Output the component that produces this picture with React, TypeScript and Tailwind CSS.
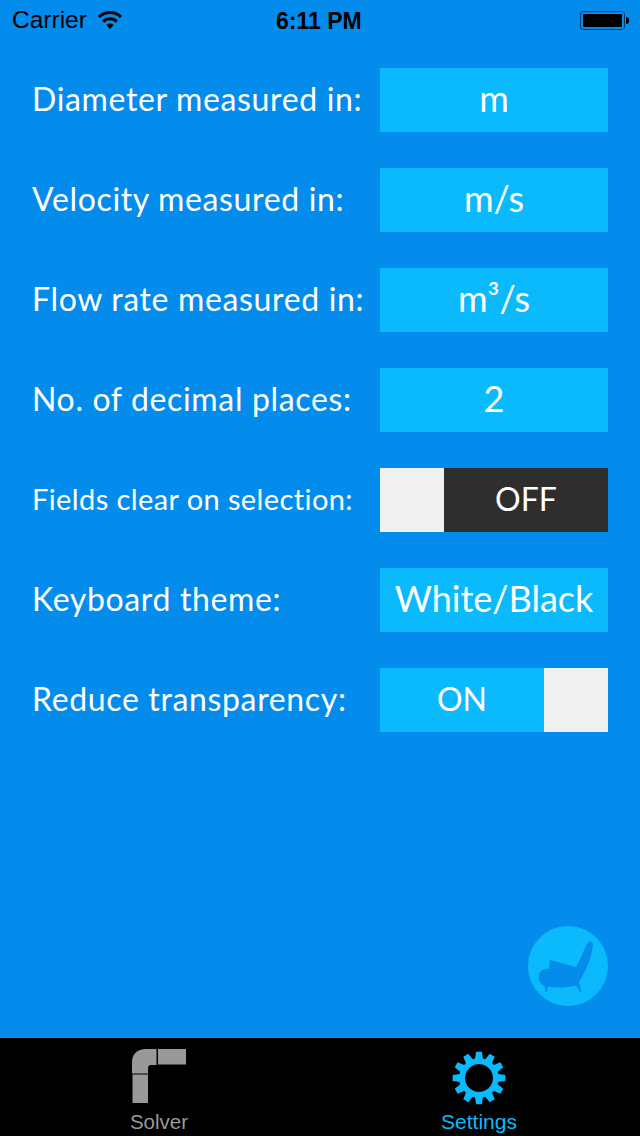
import React from "react";

const gearPath = (() => {
  const cx = 30, cy = 30, n = 12, ro = 26.5, ri = 19.8;
  let d = "";
  for (let i = 0; i < n; i++) {
    const a = (i * 2 * Math.PI) / n - Math.PI / 2;
    const pts: [number, number][] = [
      [ri, a - 0.2],
      [ro, a - 0.11],
      [ro, a + 0.11],
      [ri, a + 0.2],
    ];
    pts.forEach(([r, t], j) => {
      d += `${i === 0 && j === 0 ? "M" : "L"}${(cx + r * Math.cos(t)).toFixed(2)} ${(cy + r * Math.sin(t)).toFixed(2)}`;
    });
  }
  d += "Z M30 16 a14 14 0 1 0 0.01 0 Z";
  return d;
})();

function Row({ label, small, children }: { label: string; small?: boolean; children: React.ReactNode }) {
  return (
    <div className="flex h-16 items-center justify-between">
      <span className={`pb-[2px] pl-8 text-white ${small ? "text-[29px] tracking-[0.4px]" : "text-[32px] tracking-[0.65px]"}`}>{label}</span>
      {children}
    </div>
  );
}

function Box({ value }: { value: string }) {
  return (
    <div className="flex h-16 w-[228px] items-center justify-center bg-[#0bbafd] pb-1 text-[36px] text-white">{value}</div>
  );
}

export default function App() {
  return (
    <div className="flex h-[1136px] w-[640px] flex-col overflow-hidden bg-[#038cec] font-['Lato','Open_Sans',sans-serif]">
      {/* Status bar */}
      <div className="relative flex h-10 shrink-0 items-center pl-3 pr-[11px] font-['Liberation_Sans',sans-serif] text-black">
        <span className="text-[24.5px] leading-none">Carrier</span>
        <svg className="ml-[10px]" width="26" height="20" viewBox="0 0 26 20">
          <path d="M13 19 L9.4 15 A5.2 5.2 0 0 1 16.6 15 Z" fill="#000" />
          <path d="M6.2 11.6 A9.8 9.8 0 0 1 19.8 11.6" fill="none" stroke="#000" strokeWidth="3" />
          <path d="M2 7 A15.5 15.5 0 0 1 24 7" fill="none" stroke="#000" strokeWidth="3" />
        </svg>
        <span className="absolute left-[276px] top-[7px] text-[23px] font-bold leading-[28px]">6:11 PM</span>
        <div className="ml-auto flex items-center">
          <div className="h-[19px] w-[45px] rounded-[3px] border border-[#02396b] p-[2px]">
            <div className="h-full w-full rounded-[1px] bg-black" />
          </div>
          <div className="ml-px h-[7px] w-[3px] rounded-r-sm bg-black" />
        </div>
      </div>

      {/* Settings */}
      <div className="mt-7 flex w-[608px] flex-col gap-9">
        <Row label="Diameter measured in:"><Box value="m" /></Row>
        <Row label="Velocity measured in:"><Box value="m/s" /></Row>
        <Row label="Flow rate measured in:"><Box value="m³/s" /></Row>
        <Row label="No. of decimal places:"><Box value="2" /></Row>
        <Row label="Fields clear on selection:" small>
          <div className="flex h-16 w-[228px]">
            <div className="w-16 bg-[#f0f0f0]" />
            <div className="flex flex-1 items-center justify-center bg-[#2e2e2e] pb-[2px] text-[32px] text-white">OFF</div>
          </div>
        </Row>
        <Row label="Keyboard theme:"><Box value="White/Black" /></Row>
        <Row label="Reduce transparency:">
          <div className="flex h-16 w-[228px]">
            <div className="flex flex-1 items-center justify-center bg-[#0bbafd] pb-[2px] text-[32px] text-white">ON</div>
            <div className="w-16 bg-[#f0f0f0]" />
          </div>
        </Row>
      </div>

      {/* Floating button */}
      <div className="mt-auto mb-8 mr-8 flex h-20 w-20 items-center justify-center self-end rounded-full bg-[#0bbafd]">
        <svg width="80" height="80" viewBox="0 0 80 80">
          <path
            d="M22 34 L48 41 C52 35 55 25 59 18 C61 14 65 15 65 19 C64 31 58 45 51 56 L53.5 66 L52 66 L48 59.5 C38 62 28 62 20 60.5 L19 66 L17.5 66 L16.5 60 C12 58 10 54 11 49 C11.5 45 16 42 21 43 Z"
            fill="#038cec"
          />
        </svg>
      </div>

      {/* Tab bar */}
      <div className="flex h-[98px] shrink-0 bg-black">
        <div className="flex w-80 flex-col items-center pt-[11px]">
          <svg className="-ml-[2px]" width="54" height="54" viewBox="0 0 54 54">
            <path d="M0.5 54 V25.5 H16 V54 Z" fill="#999" />
            <path d="M0 24.5 V14 C0 5 5 0 14 0 H24.5 V16 H19 C17 16 16 17 16 19 V24.5 Z" fill="#999" />
            <path d="M26 0 H54 V15.5 H26 Z" fill="#999" />
          </svg>
          <span className="mt-2 -ml-[2px] font-['Liberation_Sans',sans-serif] text-[20.5px] leading-[22px] text-[#999]">Solver</span>
        </div>
        <div className="flex w-80 flex-col items-center pt-[10px]">
          <svg className="-ml-[2px]" width="60" height="60" viewBox="0 0 60 60">
            <path d={gearPath} fill="#0bbafd" fillRule="evenodd" />
          </svg>
          <span className="mt-[3px] -ml-[2px] font-['Liberation_Sans',sans-serif] text-[21px] leading-[22px] text-[#0bbafd]">Settings</span>
        </div>
      </div>
    </div>
  );
}
